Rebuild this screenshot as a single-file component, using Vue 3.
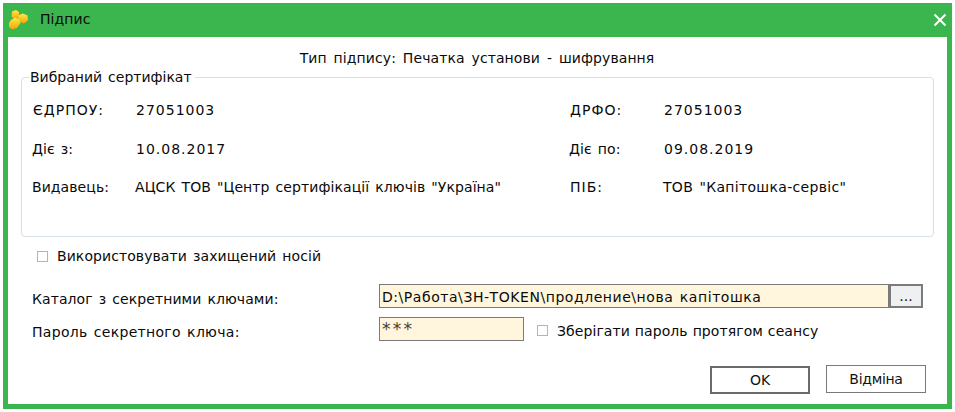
<script setup>
import { ref } from 'vue';

const rows = ref([
  { label: 'ЄДРПОУ:', value: '27051003', label2: 'ДРФО:', value2: '27051003' },
  { label: 'Діє з:', value: '10.08.2017', label2: 'Діє по:', value2: '09.08.2019' },
  { label: 'Видавець:', value: 'АЦСК ТОВ "Центр сертифікації ключів "Україна"', label2: 'ПІБ:', value2: 'ТОВ "Капітошка-сервіс"' }
]);

// digits and capitals sit wider than the rest of the text
function isWide(text) {
  return /^[\dА-ЯЄІ.:]+$/.test(text);
}
</script>

<template>
  <div class="dialog">
    <div class="titlebar">
      <svg class="logo" width="22" height="22" viewBox="0 0 22 22">
        <defs>
          <linearGradient id="honey" x1="0" y1="0" x2="0" y2="1">
            <stop offset="0" stop-color="#ffe94a" />
            <stop offset="1" stop-color="#f5a400" />
          </linearGradient>
        </defs>
        <path d="M4 2.5 L8 1 L11 3 L11 8 L7 10 L3.5 8 Z" fill="url(#honey)" />
        <path d="M11 6 L15 4.5 L19.5 6.5 L20 11 L16 14.5 L12 13 L10 9 Z" fill="url(#honey)" />
        <path d="M3 11 L7 8.5 L11 10 L12.5 14 L9 19 L4 20.5 L1 18 L1 14 Z" fill="url(#honey)" />
      </svg>
      <span class="title">Підпис</span>
      <svg class="close" width="14" height="14" viewBox="0 0 14 14">
        <path d="M1.5 1.5 L12.5 12.5 M12.5 1.5 L1.5 12.5" stroke="#fff" stroke-width="2" fill="none" />
      </svg>
    </div>

    <div class="content">
      <div class="sign-type">Тип підпису: Печатка установи - шифрування</div>

      <fieldset class="cert">
        <legend>Вибраний сертифікат</legend>
        <div v-for="row in rows" :key="row.label" class="cert-row">
          <span :class="{ wide: isWide(row.label) }">{{ row.label }}</span>
          <span :class="{ wide: isWide(row.value) }">{{ row.value }}</span>
          <span :class="{ wide: isWide(row.label2) }">{{ row.label2 }}</span>
          <span :class="{ wide: isWide(row.value2) }">{{ row.value2 }}</span>
        </div>
      </fieldset>

      <label class="check protected">
        <span class="box"></span>
        Використовувати захищений носій
      </label>

      <div class="form-row path-row">
        <span class="form-label">Каталог з секретними ключами:</span>
        <div class="path-field">
          <div class="input path-input">D:\Работа\ЗН-TOKEN\продление\нова капітошка</div>
          <button class="browse">...</button>
        </div>
      </div>

      <div class="form-row pass-row">
        <span class="form-label pass-label">Пароль секретного ключа:</span>
        <div class="input pass-input">***</div>
        <label class="check remember">
          <span class="box"></span>
          <span class="remember-text">Зберігати пароль протягом сеансу</span>
        </label>
      </div>

      <div class="actions">
        <button class="btn btn-ok">OK</button>
        <button class="btn btn-cancel">Відміна</button>
      </div>
    </div>
  </div>
</template>

<style>
html, body {
  background: #fff;
}
</style>

<style scoped>
.dialog {
  width: 949px;
  height: 406px;
  margin: 3px 0 0 3px;
  background: #3bb54e;
  padding: 0 5px 5px;
  box-sizing: border-box;
  display: flex;
  flex-direction: column;
  font-family: "DejaVu Sans", Verdana, sans-serif;
  font-size: 14px;
  letter-spacing: 0.08px;
  word-spacing: 1.5px;
  color: #0a0a0a;
}

.titlebar {
  height: 34px;
  flex: none;
  display: flex;
  align-items: center;
}

.title {
  margin-left: 10px;
  margin-top: -2px;
}

.close {
  margin-left: auto;
  margin-top: -1px;
}

.content {
  flex: 1;
  background: #fff;
  padding: 12px 13px 0 13px;
  display: flex;
  flex-direction: column;
}

.sign-type {
  text-align: center;
  line-height: 18px;
  word-spacing: 2.4px;
  padding-right: 1px;
}

.cert {
  margin: 1px 0 0;
  padding: 0 0 0 10px;
  height: 169px;
  box-sizing: border-box;
  border: 1px solid #d5dfe6;
  border-radius: 4px;
  min-width: 0;
}

.cert legend {
  padding: 0 3px 0 1px;
  margin-left: -3px;
  line-height: 18px;
  letter-spacing: 0;
}

.cert-row {
  display: grid;
  grid-template-columns: 103px 434px 94px 1fr;
  height: 38.5px;
  align-items: center;
}

.cert-row:first-of-type {
  margin-top: 5px;
}

.cert-row:last-child span:last-child {
  letter-spacing: 0.32px;
}

.wide {
  letter-spacing: 1px;
  padding-left: 1px;
}

.check {
  display: flex;
  align-items: center;
  gap: 9px;
}

.box {
  width: 9px;
  height: 9px;
  border: 1px solid #b4b4b4;
  background: #fff;
}

.protected {
  margin: 10px 0 0 16px;
  line-height: 18px;
}

.form-row {
  display: flex;
  align-items: center;
}

.form-label {
  width: 358px;
  flex: none;
  padding-left: 11px;
  padding-top: 5px;
  box-sizing: border-box;
}

.pass-label {
  letter-spacing: 0.3px;
}

.path-row {
  margin-top: 19px;
}

.pass-row {
  margin-top: 9px;
}

.input {
  height: 24px;
  box-sizing: border-box;
  border: 1px solid #7a7a7a;
  background: #fff6dd;
  padding: 0 2px;
  line-height: 24px;
}

.path-field {
  display: flex;
  width: 544px;
}

.path-input {
  flex: 1;
  letter-spacing: 0.55px;
}

.browse {
  width: 34px;
  height: 24px;
  border: 2px solid #7a7a7a;
  background: #eef0f2;
  font: inherit;
  color: #111;
  padding: 0;
}

.pass-input {
  width: 145px;
  font-size: 17px;
  letter-spacing: 2.2px;
  line-height: 23px;
  color: #4a4030;
}

.remember {
  margin-left: 13px;
  padding-top: 3px;
}

.remember-text {
  word-spacing: 0.4px;
}

.actions {
  margin-top: 24px;
  padding-right: 8px;
  display: flex;
  justify-content: flex-end;
  align-items: flex-start;
  gap: 16px;
}

.btn {
  width: 100px;
  height: 28px;
  box-sizing: border-box;
  border: 1px solid #7a7a7a;
  background: #fff;
  font: inherit;
  color: #111;
  padding: 0;
}

.btn-ok {
  border: 2px solid #6a6a6a;
  margin-top: 1px;
}

.btn-cancel {
  letter-spacing: -0.3px;
}
</style>
